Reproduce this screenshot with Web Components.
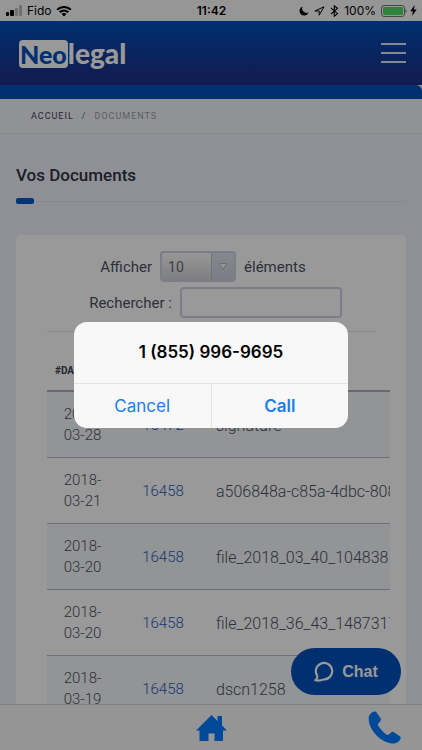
<!DOCTYPE html>
<html lang="fr">
<head>
<meta charset="utf-8">
<meta name="viewport" content="width=device-width, initial-scale=1">
<title>Neolegal - Documents</title>
<style>
  body {
    margin: 0;
    font-family: Roboto, "Liberation Sans", sans-serif;
    font-size: 15px;
    color: #4b5264;
  }
</style>
</head>
<body>
<neo-app></neo-app>

<script>
class StatusBar extends HTMLElement {
  constructor() {
    super();
    this.attachShadow({ mode: "open" });
  }

  connectedCallback() {
    this.shadowRoot.innerHTML = `
      <style>
        :host {
          display: grid;
          grid-template-columns: 1fr auto 1fr;
          align-items: center;
          height: 21px;
          padding: 0 5px 0 6px;
          background: #fbfbfb;
          color: #000;
          font: 12px/21px Inter, sans-serif;
        }
        div { display: flex; align-items: center; gap: 4px; }
        .right { justify-content: flex-end; gap: 5px; }
        .battery { display: flex; align-items: center; gap: 3px; }
        b { font-weight: 600; }
        svg { display: block; }
      </style>
      <div>
        <svg width="17" height="11" viewBox="0 0 17 11">
          <rect x="0" y="7" width="3" height="4" rx="1"/>
          <rect x="4" y="5" width="4" height="6" rx="1"/>
          <rect x="9" y="3" width="3" height="8" rx="1" fill="#bbb"/>
          <rect x="13" y="0" width="3" height="11" rx="1" fill="#bbb"/>
        </svg>
        <span>Fido</span>
        <svg width="16" height="12" viewBox="0 0 16 12">
          <path d="M1.200 4.800a9.600 9.600 0 0 1 13.600 0M3.700 7.300a6 6 0 0 1 8.600 0" fill="none" stroke="#000" stroke-width="2"/>
          <path d="M5.500 9a3.500 3.500 0 0 1 5 0L8 11.600z"/>
        </svg>
      </div>
      <b>11:42</b>
      <div class="right">
        <svg width="10" height="10" viewBox="0 0 10 10"><path d="M3.500.5A4.700 4.700 0 1 0 9.600 6.600 4.700 4.700 0 0 1 3.500.5z"/></svg>
        <svg width="11" height="10" viewBox="0 0 11 10"><path d="M10 .8.9 5h4.300v4.200z" fill="none" stroke="#000" stroke-linejoin="round"/></svg>
        <svg width="9" height="12" viewBox="0 0 9 12"><path d="M1 3l6.500 5.700L4.300 11.200V.8l3.200 2.500L1 9" fill="none" stroke="#000" stroke-width="1.100"/></svg>
        <span>100%</span>
        <span class="battery">
          <svg width="26" height="12" viewBox="0 0 26 12">
            <rect x=".5" y=".5" width="23" height="11" rx="2.500" fill="none" stroke="#777"/>
            <rect x="2" y="2" width="20" height="8" rx="1" fill="#4cd964"/>
            <path d="M24.500 4v4c1.500-.7 1.500-3.300 0-4z" fill="#777"/>
          </svg>
          <svg width="7" height="11" viewBox="0 0 7 11"><path d="M4.600 0 .3 6.200h2.600L2 11l4.700-6.500H4z"/></svg>
        </span>
      </div>
    `;
  }
}

class SiteHeader extends HTMLElement {
  constructor() {
    super();
    this.attachShadow({ mode: "open" });
  }

  connectedCallback() {
    this.shadowRoot.innerHTML = `
      <style>
        :host { display: block; }
        header {
          display: flex;
          align-items: center;
          justify-content: space-between;
          height: 64px;
          padding: 0 16px 0 19px;
          background: linear-gradient(#0050bb, #202d82);
        }
        a {
          display: flex;
          align-items: baseline;
          color: #fff;
          font: 900 28px/28px Lato, sans-serif;
          text-decoration: none;
        }
        .box {
          padding: 0 1px;
          border-radius: 4px;
          background: #fff;
          color: #0050bb;
          font-size: 25px;
        }
        button {
          display: flex;
          flex-direction: column;
          justify-content: space-between;
          width: 25px;
          height: 20px;
          padding: 0;
          border: 0;
          background: none;
        }
        i { height: 2px; width: 25px; background: #dde4f2; }
        .strip {
          display: flex;
          justify-content: flex-end;
          height: 14px;
          background: #0050bb;
        }
      </style>
      <header>
        <a href="#"><span class="box">Neo</span><span>legal</span></a>
        <button type="button" aria-label="Menu"><i></i><i></i><i></i></button>
      </header>
      <div class="strip">
        <svg width="5" height="6" viewBox="0 0 5 6"><path d="M0 0h5v6C5 3 3 1 0 0z" fill="#eef1f8"/></svg>
      </div>
    `;
  }
}

class BreadCrumb extends HTMLElement {
  constructor() {
    super();
    this.attachShadow({ mode: "open" });
  }

  connectedCallback() {
    this.shadowRoot.innerHTML = `
      <style>
        :host {
          display: block;
          padding: 0 31px;
          border-bottom: 1px solid #e2e5ee;
          background: #f2f4f9;
          font-size: 9px;
          line-height: 34px;
          letter-spacing: 1px;
        }
        nav { display: flex; gap: 8px; }
        a { color: #3c4150; text-decoration: none; }
        span { color: #9a9ca6; }
        .sep { color: #5f6370; }
      </style>
      <nav>
        <a href="#">${this.getAttribute("parent")}</a>
        <span class="sep">/</span>
        <span>${this.getAttribute("current")}</span>
      </nav>
    `;
  }
}

class SectionTitle extends HTMLElement {
  constructor() {
    super();
    this.attachShadow({ mode: "open" });
  }

  connectedCallback() {
    this.shadowRoot.innerHTML = `
      <style>
        :host { display: block; margin-bottom: 31px; }
        h1 {
          margin: 0 0 12px;
          color: #2f3547;
          font-size: 17px;
          line-height: 22px;
          font-weight: 500;
        }
        div { display: flex; align-items: center; }
        .mark { width: 18px; height: 6px; border-radius: 2px; background: #0057cc; }
        .line { flex: 1; height: 1px; background: #dfe3ee; }
      </style>
      <h1><slot></slot></h1>
      <div><span class="mark"></span><span class="line"></span></div>
    `;
  }
}

class DocumentFilters extends HTMLElement {
  constructor() {
    super();
    this.attachShadow({ mode: "open" });
  }

  connectedCallback() {
    this.shadowRoot.innerHTML = `
      <style>
        :host {
          display: flex;
          flex-direction: column;
          align-items: center;
          gap: 5px;
          padding-bottom: 13px;
          border-bottom: 1px solid #dcdfe8;
        }
        label { display: flex; align-items: center; gap: 8px; line-height: 28px; }
        .show { padding-right: 16px; }
        .length { position: relative; display: flex; }
        .search { padding-left: 9px; }
        select, input {
          box-sizing: border-box;
          height: 31px;
          border: 2px solid #ced2e2;
          border-radius: 4px;
          font: inherit;
          font-size: 14px;
        }
        select {
          appearance: none;
          width: 76px;
          padding: 0 6px;
          background: linear-gradient(#fdfdfd, #d2d3d6);
          color: #666b78;
        }
        input { width: 162px; background: #fff; }
        .arrow {
          position: absolute;
          top: 2px;
          right: 2px;
          display: flex;
          align-items: center;
          justify-content: center;
          width: 22px;
          height: 27px;
          border-left: 1px solid #bcc0cc;
          background: linear-gradient(#dfe2ec, #cdd1de);
          pointer-events: none;
        }
      </style>
      <label class="show">
        <span>Afficher</span>
        <span class="length">
          <select><option>10</option><option>25</option><option>50</option></select>
          <span class="arrow">
            <svg width="8" height="7" viewBox="0 0 8 7"><path d="M.5 .5h7L4 6.500z" fill="#fff" stroke="#b4b8c6"/></svg>
          </span>
        </span>
        <span>éléments</span>
      </label>
      <label class="search"><span>Rechercher :</span><input type="search"></label>
    `;
  }
}

class DocumentTable extends HTMLElement {
  constructor() {
    super();
    this.attachShadow({ mode: "open" });
  }

  connectedCallback() {
    const rows = [
      ["2018-03-28", "16472", "signature"],
      ["2018-03-21", "16458", "a506848a-c85a-4dbc-808"],
      ["2018-03-20", "16458", "file_2018_03_40_104838"],
      ["2018-03-20", "16458", "file_2018_36_43_1487317"],
      ["2018-03-19", "16458", "dscn1258"]
    ];

    this.shadowRoot.innerHTML = `
      <style>
        :host { display: block; margin-right: -15px; overflow: hidden; }
        table {
          width: 120%;
          border-spacing: 0;
          font-weight: 300;
          line-height: 21px;
          table-layout: fixed;
        }
        th {
          box-sizing: border-box;
          height: 60px;
          padding: 20px 8px 0;
          border-bottom: 2px solid #a9adb8;
          color: #3b4050;
          font-size: 10px;
          line-height: 20px;
          font-weight: 700;
          text-align: left;
        }
        td {
          padding: 12px 8px 11px;
          border-bottom: 1px solid #b4b9ca;
          text-align: center;
        }
        tbody tr:nth-child(odd) { background: #f4f7fa; }
        .date { width: 71px; }
        .file { width: 90px; }
        td:first-child { padding-left: 14px; padding-right: 14px; }
        .name { font-size: 16px; text-align: left; white-space: nowrap; }
        a { color: #1f5ebc; text-decoration: none; }
      </style>
      <table>
        <thead>
          <tr><th class="date">#DATE</th><th class="file"></th><th></th></tr>
        </thead>
        <tbody>
          ${rows.map(([date, file, name]) => `
            <tr><td>${date}</td><td><a href="#">${file}</a></td><td class="name">${name}</td></tr>
          `).join("")}
        </tbody>
      </table>
    `;
  }
}

class ContentCard extends HTMLElement {
  constructor() {
    super();
    this.attachShadow({ mode: "open" });
  }

  connectedCallback() {
    this.shadowRoot.innerHTML = `
      <style>
        :host {
          display: block;
          padding: 16px 31px;
          border-radius: 5px;
          background: #fff;
        }
      </style>
      <slot></slot>
    `;
  }
}

class ChatButton extends HTMLElement {
  constructor() {
    super();
    this.attachShadow({ mode: "open" });
  }

  connectedCallback() {
    this.shadowRoot.innerHTML = `
      <style>
        :host { display: block; }
        button {
          display: flex;
          align-items: center;
          justify-content: center;
          gap: 8px;
          width: 110px;
          height: 47px;
          padding: 0;
          border: 0;
          border-radius: 24px;
          background: #0050bb;
          color: #fff;
          font: 700 16px/20px "Liberation Sans", sans-serif;
        }
      </style>
      <button type="button">
        <svg width="20" height="21" viewBox="0 0 20 21">
          <path d="M3.300 14.800A8.200 8.200 0 1 1 10.500 18.300C7 19.500 3.500 19.800 1.300 19.300 3 18 3.500 16.500 3.300 14.800z" fill="none" stroke="#fff" stroke-width="2.200" stroke-linejoin="round"/>
        </svg>
        <slot></slot>
      </button>
    `;
  }
}

class BottomBar extends HTMLElement {
  constructor() {
    super();
    this.attachShadow({ mode: "open" });
  }

  connectedCallback() {
    this.shadowRoot.innerHTML = `
      <style>
        :host {
          display: block;
          border-top: 1px solid #d4d6dc;
          background: #f9f9f9;
        }
        nav {
          display: grid;
          grid-template-columns: 1fr auto 1fr;
          align-items: center;
          height: 45px;
          padding: 0 21px;
        }
        .phone { justify-self: end; }
        svg { display: block; }
      </style>
      <nav>
        <span></span>
        <a href="#" aria-label="Accueil">
          <svg width="31" height="26" viewBox="0 0 31 26">
            <path d="M15.500 0 0 15.500h3.500V26h9V18.500h6V26h8.500V15.500h4L26 10.500V1h-4.500v5z" fill="#007aff"/>
          </svg>
        </a>
        <a class="phone" href="#" aria-label="Appeler">
          <svg width="33" height="33" viewBox="0 0 33 33">
            <path d="M6.500.6C4 1 .8 3.800.6 7.200.5 20 14.500 32.600 26 32.500c3.600-.1 6.500-3.300 6.700-5.700.1-.7-.2-1.200-.8-1.600l-6-4c-.9-.6-1.800-.5-2.500.1l-2.600 2.300c-.6.5-1.300.6-2 .1-3-2-6.600-5.800-8.700-9.300-.4-.7-.4-1.400.2-2l2.200-2.400c.6-.7.7-1.600.2-2.400L8.600 1.400c-.5-.7-1.200-1-2.100-.8z" fill="#007aff"/>
          </svg>
        </a>
      </nav>
    `;
  }
}

class CallAlert extends HTMLElement {
  constructor() {
    super();
    this.attachShadow({ mode: "open" });
  }

  connectedCallback() {
    this.shadowRoot.innerHTML = `
      <style>
        :host {
          position: absolute;
          inset: 0;
          display: flex;
          align-items: center;
          justify-content: center;
          background: rgba(0, 0, 0, 0.4);
          font-family: Inter, sans-serif;
        }
        .alert {
          width: 65%;
          max-width: 320px;
          border-radius: 13px;
          overflow: hidden;
          background: #f8f8f9;
          text-align: center;
        }
        h2 {
          margin: 0;
          color: #000;
          font-size: 17px;
          line-height: 61px;
          font-weight: 600;
        }
        .actions { display: flex; border-top: 1px solid #e4e4e7; }
        button {
          flex: 1;
          height: 44px;
          padding: 0;
          border: 0;
          background: none;
          color: #1b7df0;
          font: inherit;
          font-size: 17px;
        }
        button + button { border-left: 1px solid #e4e4e7; font-weight: 600; }
      </style>
      <div class="alert" role="alertdialog" aria-labelledby="number">
        <h2 id="number">${this.getAttribute("number")}</h2>
        <div class="actions">
          <button type="button">Cancel</button>
          <button type="button">Call</button>
        </div>
      </div>
    `;
  }
}

class NeoApp extends HTMLElement {
  constructor() {
    super();
    this.attachShadow({ mode: "open" });
  }

  connectedCallback() {
    this.shadowRoot.innerHTML = `
      <style>
        :host {
          position: relative;
          display: flex;
          flex-direction: column;
          height: 100vh;
          overflow: hidden;
          background: #eef1f9;
        }
        main { position: relative; flex: 1; min-height: 0; overflow: hidden; }
        .page { padding: 30px 16px; }
        chat-button { position: absolute; right: 21px; bottom: 9px; }
      </style>
      <status-bar></status-bar>
      <site-header></site-header>
      <main>
        <bread-crumb parent="ACCUEIL" current="DOCUMENTS"></bread-crumb>
        <div class="page">
          <section-title>Vos Documents</section-title>
          <content-card>
            <document-filters></document-filters>
            <document-table></document-table>
          </content-card>
        </div>
        <chat-button>Chat</chat-button>
      </main>
      <bottom-bar></bottom-bar>
      <call-alert number="1 (855) 996-9695"></call-alert>
    `;
  }
}

customElements.define("status-bar", StatusBar);
customElements.define("site-header", SiteHeader);
customElements.define("bread-crumb", BreadCrumb);
customElements.define("section-title", SectionTitle);
customElements.define("document-filters", DocumentFilters);
customElements.define("document-table", DocumentTable);
customElements.define("content-card", ContentCard);
customElements.define("chat-button", ChatButton);
customElements.define("bottom-bar", BottomBar);
customElements.define("call-alert", CallAlert);
customElements.define("neo-app", NeoApp);
</script>
</body>
</html>
